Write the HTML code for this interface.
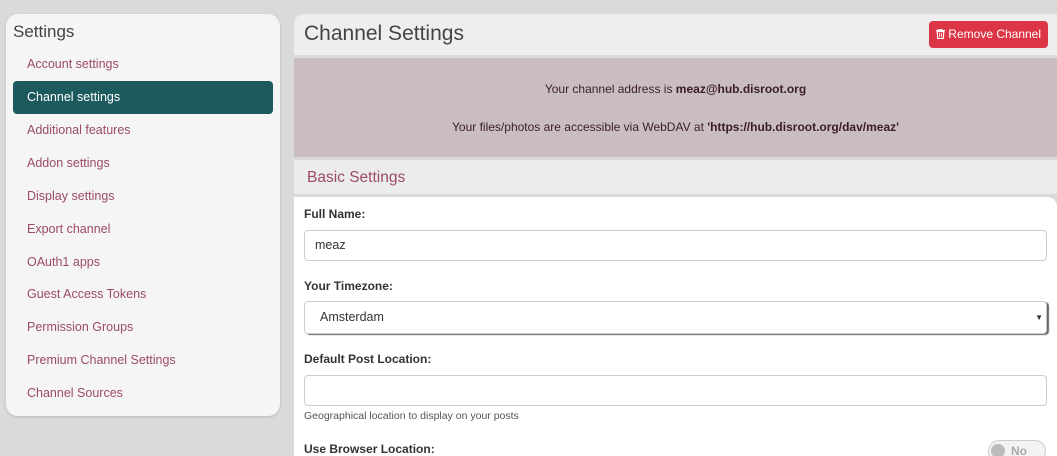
<!DOCTYPE html>
<html><head><style>
html,body{margin:0;width:1057px;height:456px;overflow:hidden}
body{background:#dadada;font-family:"Liberation Sans",sans-serif;position:relative}
.side{position:absolute;left:6px;top:14px;width:274px;height:402px;background:#f5f5f5;border-radius:12px;box-shadow:0 1px 3px rgba(0,0,0,.15)}
.side h3{margin:0;position:absolute;left:7px;top:8px;font-size:17px;font-weight:normal;color:#444}
.side a{position:absolute;left:7px;width:260px;height:33px;line-height:33px;box-sizing:border-box;padding-left:14px;font-size:12.5px;color:#9b4a6a;text-decoration:none;border-radius:4px}
.side a.act{background:#1d5a5e;color:#fff}
.hdr{position:absolute;left:294px;top:14px;width:763px;height:41px;background:#eee;border-radius:10px 0 0 0}
.hdr h2{margin:0;position:absolute;left:10px;top:8px;font-size:21px;font-weight:normal;color:#444}
.btn{position:absolute;left:635px;top:7px;width:119px;height:27px;background:#dc3545;border-radius:4px;color:#fff;font-size:12px;line-height:27px;text-align:center}
.info{position:absolute;left:294px;top:58px;width:763px;height:99px;background:#cabdc1;color:#3a1d28;font-size:12px;text-align:center}
.info p{margin:0;position:absolute;width:100%}
.bs{position:absolute;left:294px;top:160px;width:763px;height:34px;background:#ececec}
.bs span{position:absolute;left:13px;top:9px;font-size:15.5px;color:#9b4a6a}
.form{position:absolute;left:294px;top:197px;width:763px;height:259px;background:#fff;border-radius:0 10px 0 0}
.lbl{position:absolute;left:10px;font-size:12px;font-weight:bold;color:#333}
.inp{position:absolute;left:10px;width:743px;height:31px;box-sizing:border-box;border:1px solid #ccc;border-radius:4px;font-size:12.5px;line-height:29px;padding-left:10px;color:#333}
</style></head><body>
<div class="side"><h3>Settings</h3>
<a style="top:34px">Account settings</a>
<a class="act" style="top:67px">Channel settings</a>
<a style="top:100px">Additional features</a>
<a style="top:133px">Addon settings</a>
<a style="top:166px">Display settings</a>
<a style="top:199px">Export channel</a>
<a style="top:232px">OAuth1 apps</a>
<a style="top:264px">Guest Access Tokens</a>
<a style="top:297px">Permission Groups</a>
<a style="top:330px">Premium Channel Settings</a>
<a style="top:363px">Channel Sources</a>
</div>
<div class="hdr"><h2>Channel Settings</h2><div class="btn"><svg width="9" height="10" viewBox="0 0 9 10" style="vertical-align:-1px"><path d="M0 1.5h9M3 1.5V0h3v1.5M1.2 2.5h6.6l-.5 7H1.7z" stroke="#fff" fill="none" stroke-width="1.2"/><path d="M3.5 4v4M5.5 4v4" stroke="#fff" stroke-width=".8"/></svg> Remove Channel</div></div>
<div class="info"><p style="top:24px">Your channel address is <b>meaz@hub.disroot.org</b></p>
<p style="top:62px">Your files/photos are accessible via WebDAV at <b>'https://hub.disroot.org/dav/meaz'</b></p></div>
<div class="bs"><span>Basic Settings</span></div>
<div class="form">
<div class="lbl" style="top:10px">Full Name:</div>
<div class="inp" style="top:33px">meaz</div>
<div class="lbl" style="top:82px">Your Timezone:</div>
<div class="inp" style="top:104px;height:33px;line-height:31px;padding-left:15px;box-shadow:2px 1px 1px #666">Amsterdam<span style="position:absolute;right:3px;top:0;font-size:8px">▼</span></div>
<div class="lbl" style="top:155px">Default Post Location:</div>
<div class="inp" style="top:178px"></div>
<div style="position:absolute;left:10px;top:213px;font-size:10.5px;color:#555">Geographical location to display on your posts</div>
<div class="lbl" style="top:245px">Use Browser Location:</div>
<div style="position:absolute;left:694px;top:243px;width:58px;height:22px;border:1px solid #ccc;border-radius:11px;background:#f3f3f3;box-sizing:border-box"><span style="position:absolute;left:2px;top:3px;width:14px;height:14px;border-radius:50%;background:#bbb"></span><span style="position:absolute;left:22px;top:3px;font-size:12px;font-weight:bold;color:#aaa">No</span></div>
</div>
</body></html>
